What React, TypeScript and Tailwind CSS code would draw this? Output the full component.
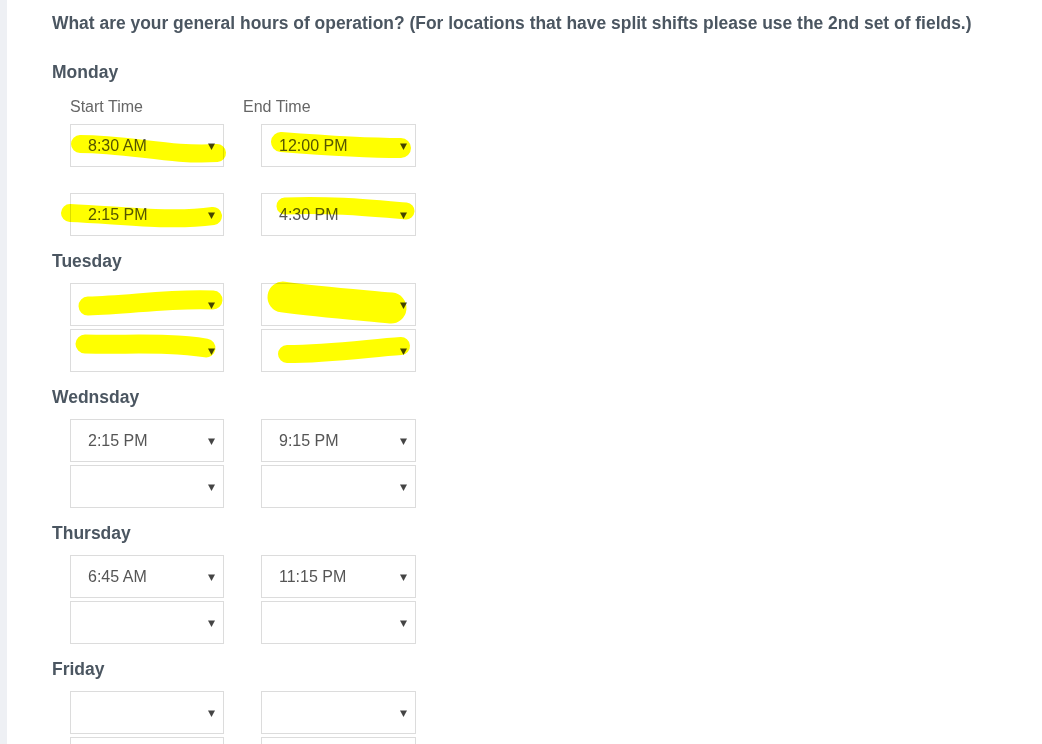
import React from "react";

type Row = [string, string];
const days: { name: string; rows: [Row, Row] }[] = [
  { name: "Tuesday", rows: [["", ""], ["", ""]] },
  { name: "Wednsday", rows: [["2:15 PM", "9:15 PM"], ["", ""]] },
  { name: "Thursday", rows: [["6:45 AM", "11:15 PM"], ["", ""]] },
  { name: "Friday", rows: [["", ""], ["", ""]] },
];

function Select({ value, wide }: { value: string; wide?: boolean }) {
  return (
    <div
      className={`${wide ? "w-[155px]" : "w-[154px]"} h-[43px] border border-[#dcdcdc] bg-white flex items-center justify-between pl-[17px] pr-[8px] text-[16px] text-[#555]`}
    >
      <span>{value}</span>
      <svg width="7" height="7" viewBox="0 0 7 7" className="mt-[1px]">
        <polygon points="0,0.5 7,0.5 3.5,7" fill="#444" />
      </svg>
    </div>
  );
}

function Pair({ row }: { row: Row }) {
  return (
    <div className="flex gap-[37px] ml-[18px]">
      <Select value={row[0]} />
      <Select value={row[1]} wide />
    </div>
  );
}

export default function App() {
  return (
    <div
      className="relative flex min-h-[744px] w-full bg-white overflow-hidden"
      style={{ fontFamily: '"Liberation Sans", Arial, sans-serif' }}
    >
      <div className="w-[7px] shrink-0 bg-[#eef0f4]" />
      <div className="pl-[45px] flex flex-col">
        <h1 className="mt-[11px] h-[24px] leading-[24px] text-[17.45px] font-bold text-[#4b5661] whitespace-nowrap">
          What are your general hours of operation? (For locations that have split shifts please use the 2nd set of fields.)
        </h1>
        <div className="mt-[25px] h-[24px] leading-[24px] text-[17.5px] font-bold text-[#4b5661]">Monday</div>
        <div className="mt-[13px] flex ml-[18px] h-[20px] leading-[20px] text-[16px] text-[#666]">
          <span className="w-[173px]">Start Time</span>
          <span>End Time</span>
        </div>
        <div className="mt-[7px]">
          <Pair row={["8:30 AM", "12:00 PM"]} />
        </div>
        <div className="mt-[26px]">
          <Pair row={["2:15 PM", "4:30 PM"]} />
        </div>
        {days.map((d) => (
          <div key={d.name} className="flex flex-col">
            <div className="pt-[13px] pb-[10px] h-[47px] leading-[24px] text-[17.5px] font-bold text-[#4b5661]">
              {d.name}
            </div>
            <Pair row={d.rows[0]} />
            <div className="mt-[3px]">
              <Pair row={d.rows[1]} />
            </div>
          </div>
        ))}
      </div>
      <svg
        className="absolute left-0 top-0 pointer-events-none mix-blend-multiply"
        width="1042"
        height="744"
        viewBox="0 0 1042 744"
      >
        <g fill="none" stroke="#ffff00" strokeLinecap="round" strokeLinejoin="round">
          <path d="M80 144 C 130 144, 170 156, 217 153" strokeWidth="18" />
          <path d="M281 142 C 320 145, 360 148, 401 148" strokeWidth="20" />
          <path d="M70 213 C 120 215, 170 222, 213 216" strokeWidth="18" />
          <path d="M285 206 C 330 204, 370 208, 406 211" strokeWidth="17" />
          <path d="M88 306 C 130 305, 170 298, 213 300" strokeWidth="19" />
          <path d="M283 297 C 320 302, 360 305, 391 308" strokeWidth="31" />
          <path d="M85 344 C 130 345, 170 342, 206 348" strokeWidth="19" />
          <path d="M287 354 C 330 354, 370 348, 401 346" strokeWidth="18" />
        </g>
      </svg>
    </div>
  );
}
